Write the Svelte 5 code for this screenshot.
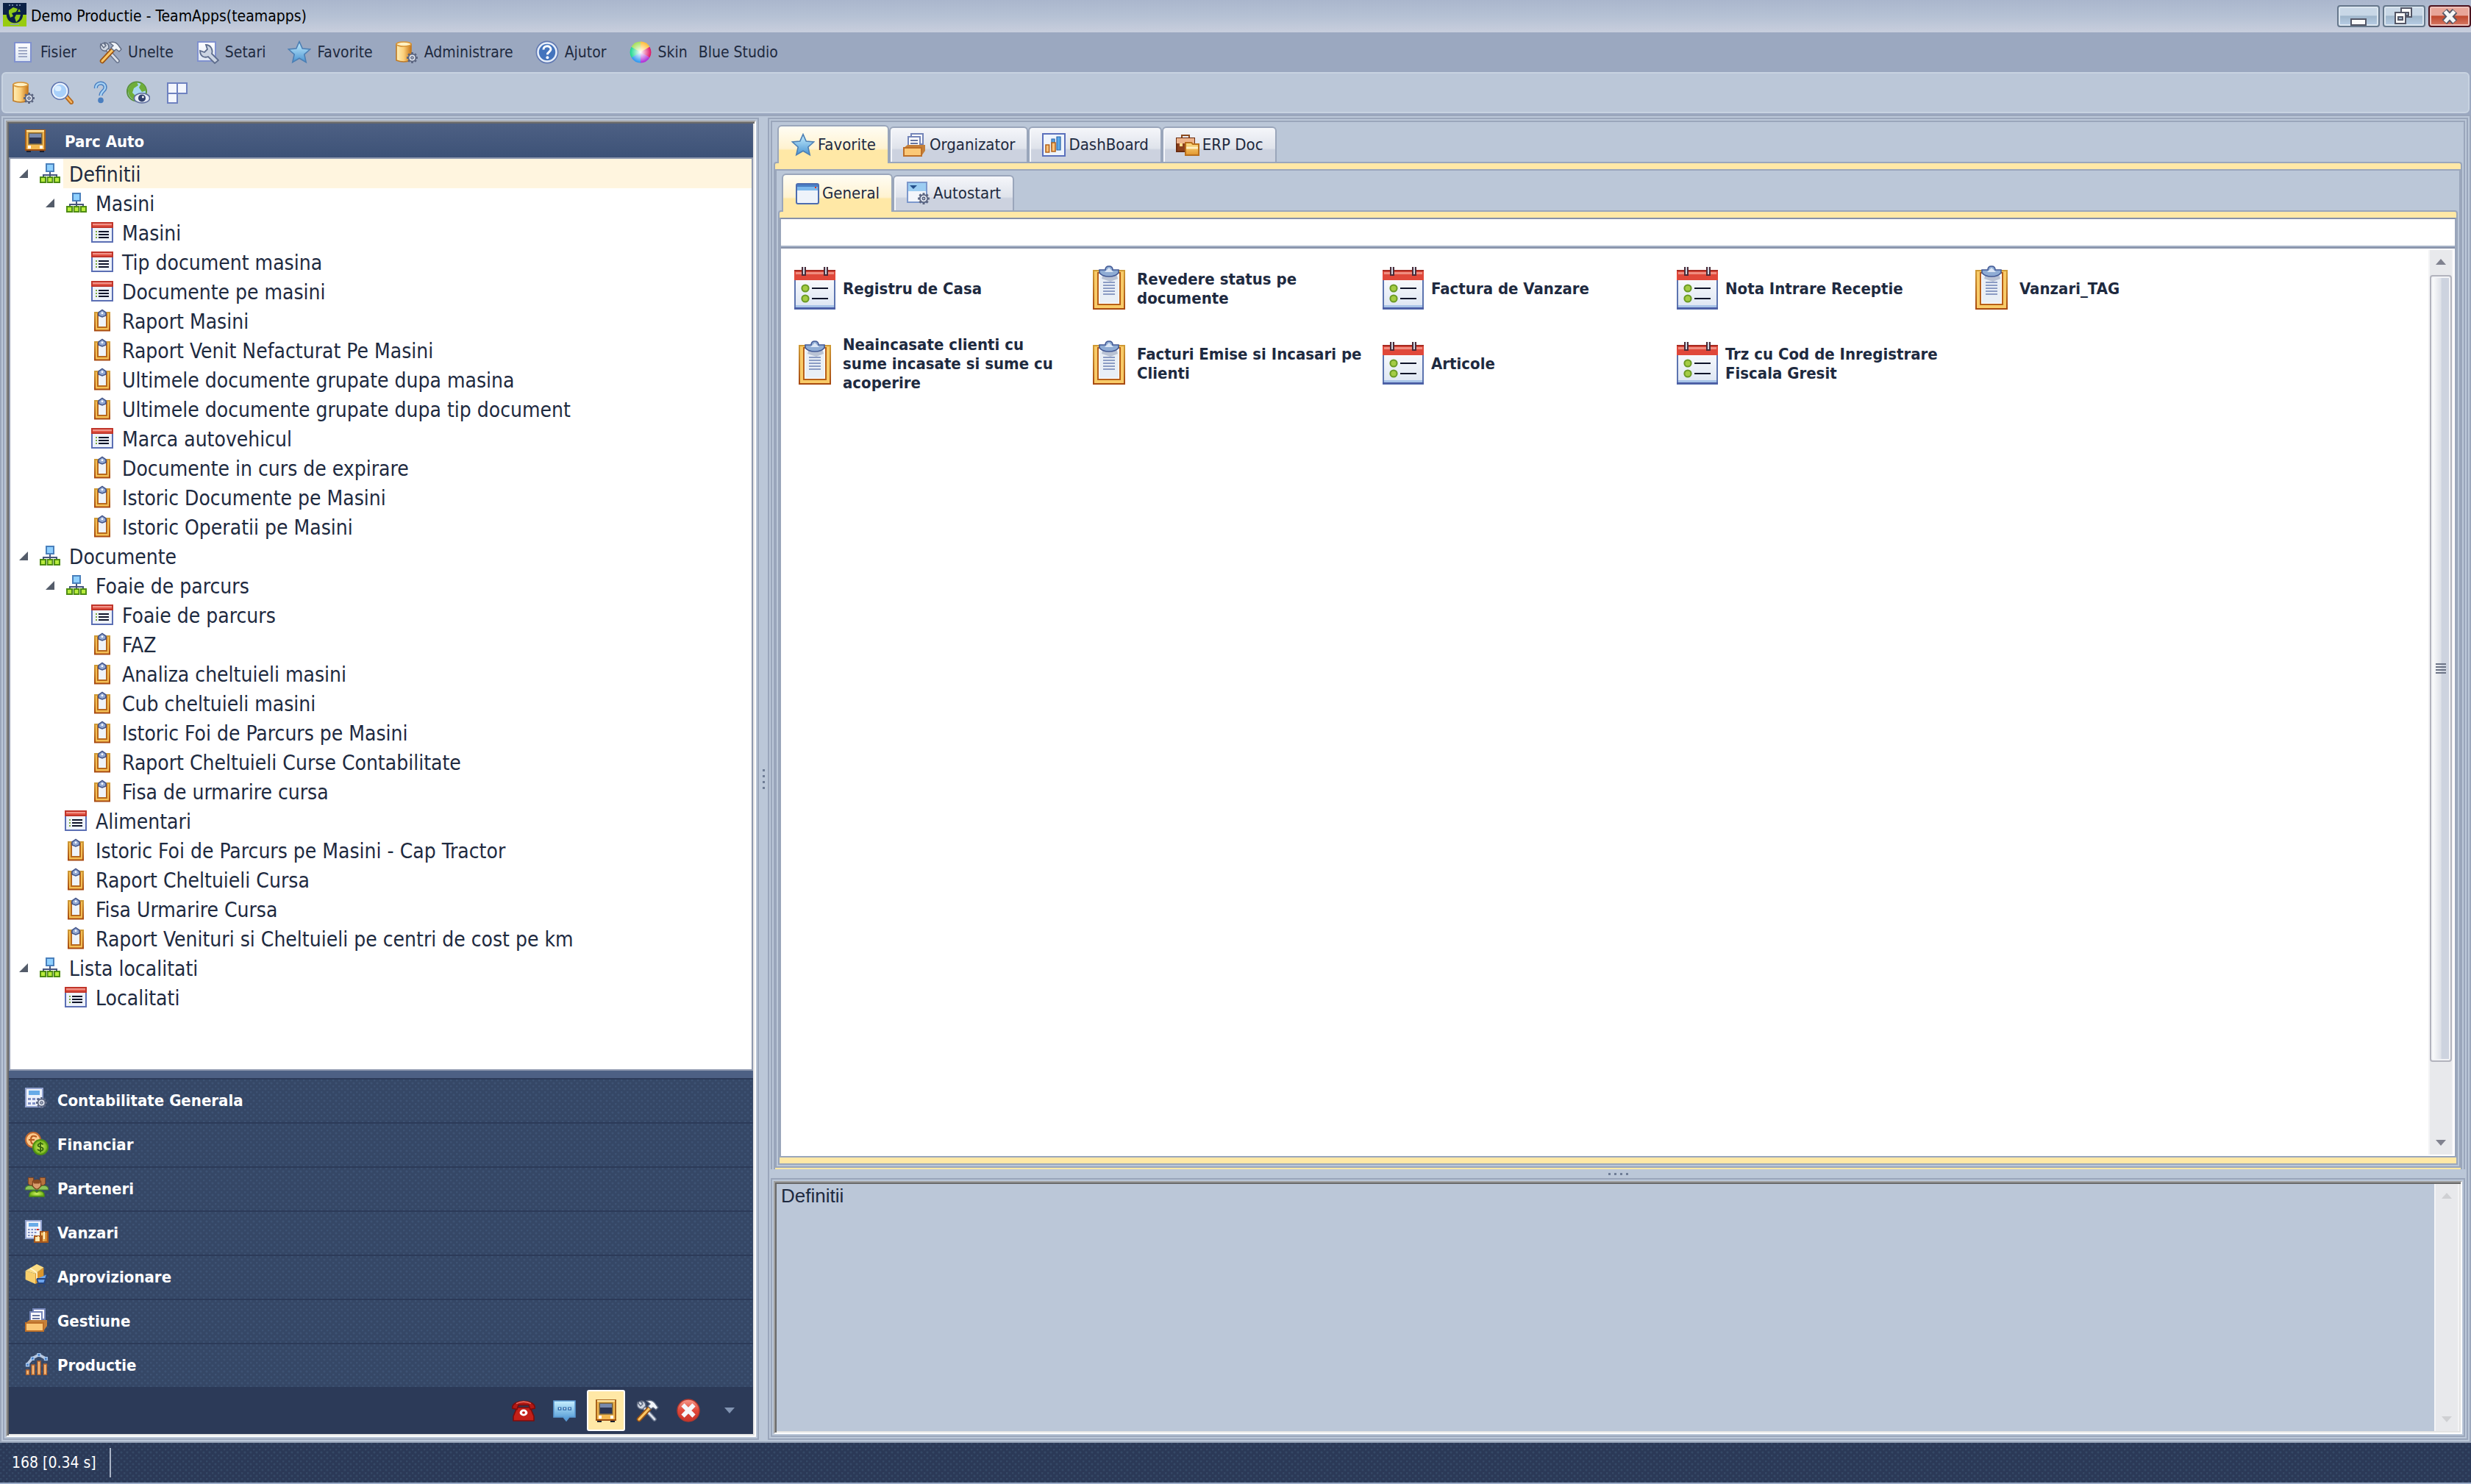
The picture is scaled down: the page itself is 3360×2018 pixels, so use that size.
<script>
	const menu = [
		{ name: 'Fisier', icon: 'page' },
		{ name: 'Unelte', icon: 'tools' },
		{ name: 'Setari', icon: 'settings' },
		{ name: 'Favorite', icon: 'star' },
		{ name: 'Administrare', icon: 'dbgear' },
		{ name: 'Ajutor', icon: 'help' },
		{ name: 'Skin', icon: 'wheel' }
	];

	const toolbar = [
		{ name: 'Baza de date', icon: 'dbgear' },
		{ name: 'Cautare', icon: 'search' },
		{ name: 'Ajutor', icon: 'question' },
		{ name: 'Web', icon: 'globe' },
		{ name: 'Ferestre', icon: 'layout' }
	];

	const tree = [
		{ name: 'Definitii', level: 0, icon: 'nodes' },
		{ name: 'Masini', level: 1, icon: 'nodes' },
		{ name: 'Masini', level: 2, icon: 'list' },
		{ name: 'Tip document masina', level: 2, icon: 'list' },
		{ name: 'Documente pe masini', level: 2, icon: 'list' },
		{ name: 'Raport Masini', level: 2, icon: 'clip' },
		{ name: 'Raport Venit Nefacturat Pe Masini', level: 2, icon: 'clip' },
		{ name: 'Ultimele documente grupate dupa masina', level: 2, icon: 'clip' },
		{ name: 'Ultimele documente grupate dupa tip document', level: 2, icon: 'clip' },
		{ name: 'Marca autovehicul', level: 2, icon: 'list' },
		{ name: 'Documente in curs de expirare', level: 2, icon: 'clip' },
		{ name: 'Istoric Documente pe Masini', level: 2, icon: 'clip' },
		{ name: 'Istoric Operatii pe Masini', level: 2, icon: 'clip' },
		{ name: 'Documente', level: 0, icon: 'nodes' },
		{ name: 'Foaie de parcurs', level: 1, icon: 'nodes' },
		{ name: 'Foaie de parcurs', level: 2, icon: 'list' },
		{ name: 'FAZ', level: 2, icon: 'clip' },
		{ name: 'Analiza cheltuieli masini', level: 2, icon: 'clip' },
		{ name: 'Cub cheltuieli masini', level: 2, icon: 'clip' },
		{ name: 'Istoric Foi de Parcurs pe Masini', level: 2, icon: 'clip' },
		{ name: 'Raport Cheltuieli Curse Contabilitate', level: 2, icon: 'clip' },
		{ name: 'Fisa de urmarire cursa', level: 2, icon: 'clip' },
		{ name: 'Alimentari', level: 1, icon: 'list' },
		{ name: 'Istoric Foi de Parcurs pe Masini - Cap Tractor', level: 1, icon: 'clip' },
		{ name: 'Raport Cheltuieli Cursa', level: 1, icon: 'clip' },
		{ name: 'Fisa Urmarire Cursa', level: 1, icon: 'clip' },
		{ name: 'Raport Venituri si Cheltuieli pe centri de cost pe km', level: 1, icon: 'clip' },
		{ name: 'Lista localitati', level: 0, icon: 'nodes' },
		{ name: 'Localitati', level: 1, icon: 'list' }
	];

	const modules = [
		{ name: 'Contabilitate Generala', icon: 'calcgear' },
		{ name: 'Financiar', icon: 'coins' },
		{ name: 'Parteneri', icon: 'people' },
		{ name: 'Vanzari', icon: 'calcboxes' },
		{ name: 'Aprovizionare', icon: 'box' },
		{ name: 'Gestiune', icon: 'drawer' },
		{ name: 'Productie', icon: 'bars' }
	];

	const small = [
		{ name: 'Telefon', icon: 'phone' },
		{ name: 'Mesaje', icon: 'chat' },
		{ name: 'Parc Auto', icon: 'bus' },
		{ name: 'Unelte', icon: 'tools' },
		{ name: 'Inchide', icon: 'cancel' }
	];

	const tabs = [
		{ name: 'Favorite', icon: 'star' },
		{ name: 'Organizator', icon: 'drawer' },
		{ name: 'DashBoard', icon: 'chart' },
		{ name: 'ERP Doc', icon: 'briefcase' }
	];

	const subtabs = [
		{ name: 'General', icon: 'window' },
		{ name: 'Autostart', icon: 'autostart' }
	];

	const favorites = [
		{ name: 'Registru de Casa', icon: 'biglist' },
		{ name: 'Revedere status pe documente', icon: 'bigclip' },
		{ name: 'Factura de Vanzare', icon: 'biglist' },
		{ name: 'Nota Intrare Receptie', icon: 'biglist' },
		{ name: 'Vanzari_TAG', icon: 'bigclip' },
		{ name: 'Neaincasate clienti cu sume incasate si sume cu acoperire', icon: 'bigclip' },
		{ name: 'Facturi Emise si Incasari pe Clienti', icon: 'bigclip' },
		{ name: 'Articole', icon: 'biglist' },
		{ name: 'Trz cu Cod de Inregistrare Fiscala Gresit', icon: 'biglist' }
	];

	let selected = $state(0);
	let module = $state('Parc Auto');
	let tab = $state('Favorite');
	let subtab = $state('General');
</script>

<svelte:head>
	<title>Demo Productie - TeamApps(teamapps)</title>
</svelte:head>

{#snippet icon(name)}
	<svg class="icon" viewBox="0 0 16 16" aria-hidden="true"><use href="#{name}" /></svg>
{/snippet}

{#snippet arrow(dir)}
	<svg class="arrow" viewBox="0 0 14 8" aria-hidden="true">
		<path d={dir === 'up' ? 'M7 0 14 8H0z' : 'M0 0h14L7 8z'} fill="currentColor" />
	</svg>
{/snippet}

<svg class="defs" width="0" height="0" aria-hidden="true">
	<defs>
		<linearGradient id="gold" x1="0" x2="1"><stop offset="0" stop-color="#fff0b8" /><stop offset=".5" stop-color="#fbcf7a" /><stop offset="1" stop-color="#c87618" /></linearGradient>
		<linearGradient id="goldv" x2="0" y2="1"><stop offset="0" stop-color="#fde08a" /><stop offset="1" stop-color="#e2952c" /></linearGradient>
		<linearGradient id="sky" x2="0" y2="1"><stop offset="0" stop-color="#c8f0ff" /><stop offset="1" stop-color="#4a94d2" /></linearGradient>
		<linearGradient id="sheet" x2="0" y2="1"><stop offset="0" stop-color="#ffffff" /><stop offset="1" stop-color="#dce5f2" /></linearGradient>
		<linearGradient id="red" x2="0" y2="1"><stop offset="0" stop-color="#f59a8c" /><stop offset=".5" stop-color="#e0483a" /><stop offset="1" stop-color="#c8342a" /></linearGradient>
		<linearGradient id="clipedge" x2="0" y2="1"><stop offset="0" stop-color="#cf9a35" /><stop offset="1" stop-color="#a84a10" /></linearGradient>
		<radialGradient id="lime"><stop offset="0" stop-color="#d8f468" /><stop offset="1" stop-color="#6cae14" /></radialGradient>
		<radialGradient id="white"><stop offset="0" stop-color="#fff" /><stop offset="1" stop-color="#fff" stop-opacity="0" /></radialGradient>
	</defs>

	<symbol id="gear" viewBox="0 0 16 16">
		<path d="M8 1v14M1 8h14M3 3l10 10M13 3L3 13" stroke="#5b6580" stroke-width="2.6" />
		<circle cx="8" cy="8" r="4.6" fill="#e4e9f2" stroke="#5b6580" stroke-width="1.6" />
		<circle cx="8" cy="8" r="1.7" fill="#aab4c8" stroke="#4a5470" />
	</symbol>
	<symbol id="logo" viewBox="0 0 16 16">
		<path d="M0 0h16v8H0z" fill="#0b2147" />
		<path d="M0 8h16v8H0z" fill="#98cc10" />
		<circle cx="8" cy="8" r="5.6" fill="#0b2147" />
		<path d="M4 5l3-2 3 1-1 2-3 1 1 2-2 1-1-3zM9 8l3 0-1 3-2 2-1-3zM11 4l1 2-2 0z" fill="#90c918" />
		<path d="M4 1.5h1m1 0h1m2 0h1m1 0h1M5 14.5h6" stroke="#8aa0c0" stroke-width=".7" />
	</symbol>
	<symbol id="page" viewBox="0 0 16 16">
		<path d="M2.500 1.500h11v13h-11z" fill="url(#sheet)" stroke="#8091cf" />
		<path d="M5 5h6M5 7h6M5 9h6M5 11h6" stroke="#8591b5" stroke-width=".8" />
	</symbol>
	<symbol id="tools" viewBox="0 0 16 16">
		<path d="M3 3l10 11" stroke="#65718a" stroke-width="2.8" stroke-linecap="round" />
		<path d="M3 3l10 11" stroke="#dbe1ea" stroke-width="1.4" stroke-linecap="round" />
		<path d="M1.500 2.500c-1 3 1 5 3.500 4.500l2-2c0-2-1-3.500-3-3.500l1 2-1.500 1.500z" fill="#d0d7e2" stroke="#606b82" stroke-width=".7" />
		<path d="M10 6l-7.500 8" stroke="#9c5312" stroke-width="3.200" stroke-linecap="round" />
		<path d="M10 6l-7.500 8" stroke="#fac766" stroke-width="1.600" stroke-linecap="round" />
		<path d="M7.500 1.500c3-1 5 0 6.500 2.500l1.500 2-1.500 1.500-2-1.500-1.500 1-2-2 1.500-1.500z" fill="#f2f5f9" stroke="#606b82" stroke-width=".7" />
	</symbol>
	<symbol id="settings" viewBox="0 0 16 16">
		<path d="M1.500 1h12v13h-12z" fill="url(#sheet)" stroke="#8091cf" />
		<path d="M7 3l1 3-2 2-3-1c0 4 3 5 5.500 4l4.500 4.500 2.500-2L11 9c1-3-1-6-4-6z" fill="#cbd4e2" stroke="#5d6c8c" stroke-width=".9" />
	</symbol>
	<symbol id="star" viewBox="0 0 16 16">
		<path d="M8 .8l2.100 4.700 5.200.5-3.900 3.500 1.200 5.300L8 12.100l-4.600 2.700 1.200-5.300L.7 6l5.200-.5z" fill="url(#sky)" stroke="#4c7fb4" stroke-width=".8" />
	</symbol>
	<symbol id="dbgear" viewBox="0 0 16 16">
		<path d="M1 2.500v11q5 2 10 0v-11z" fill="url(#gold)" stroke="#c07a24" stroke-width=".8" />
		<ellipse cx="6" cy="2.500" rx="5" ry="1.500" fill="#fff1c4" stroke="#d79538" stroke-width=".8" />
		<use href="#gear" x="7.500" y="7.500" width="8.500" height="8.500" />
	</symbol>
	<symbol id="help" viewBox="0 0 16 16">
		<circle cx="8" cy="8" r="7.300" fill="#e8effa" stroke="#6179b2" stroke-width=".8" />
		<circle cx="8" cy="8" r="5.600" fill="#4474bd" />
		<path d="M5.500 6.200c0-3 5-3 5-.2 0 1.800-2.300 1.700-2.300 3.600" fill="none" stroke="#fff" stroke-width="1.500" />
		<circle cx="8.200" cy="11.600" r="1" fill="#fff" />
	</symbol>
	<symbol id="wheel" viewBox="0 0 16 16">
		<path d="M8 8V.8A7.200 7.200 0 0 1 14.200 4.400z" fill="#ffc040" />
		<path d="M8 8l6.200-3.600a7.200 7.200 0 0 1 0 7.200z" fill="#e01868" />
		<path d="M8 8l6.200 3.600A7.200 7.200 0 0 1 8 15.200z" fill="#b030d8" />
		<path d="M8 8v7.200a7.200 7.200 0 0 1-6.200-3.600z" fill="#3098f0" />
		<path d="M8 8l-6.200 3.600a7.200 7.200 0 0 1 0-7.200z" fill="#20d890" />
		<path d="M8 8L1.800 4.400A7.200 7.200 0 0 1 8 .8z" fill="#a8e060" />
		<circle cx="8" cy="8" r="7" fill="url(#white)" />
	</symbol>
	<symbol id="search" viewBox="0 0 16 16">
		<path d="M11 10.500l3.500 4" stroke="#b56a20" stroke-width="3" stroke-linecap="round" />
		<path d="M11.500 11l3 3.500" stroke="#f5b562" stroke-width="1.300" stroke-linecap="round" />
		<circle cx="6.800" cy="6.800" r="5.700" fill="#a9d0fa" stroke="#5d74b0" />
		<circle cx="6.800" cy="6.800" r="4.900" fill="none" stroke="#eef4fc" />
		<ellipse cx="5.500" cy="5.200" rx="2.200" ry="1.800" fill="#dcefff" />
	</symbol>
	<symbol id="question" viewBox="0 0 16 16">
		<path d="M5.200 5c-.3-4.500 6.800-4.500 6.300-.3C11.300 7 8.500 7 8.500 10" fill="none" stroke="#4a7fc0" stroke-width="2.600" />
		<path d="M5.200 5c-.3-4.500 6.800-4.500 6.300-.3C11.300 7 8.500 7 8.500 10" fill="none" stroke="#a8d4f5" stroke-width="1.200" />
		<circle cx="8.500" cy="13.200" r="1.900" fill="#4a7fc0" />
	</symbol>
	<symbol id="globe" viewBox="0 0 16 16">
		<circle cx="7" cy="7.200" r="6.500" fill="#a9d8f2" stroke="#59923c" />
		<path d="M1 6c1-3 3-5 6-5l1 2-3 2-1 3 2 2-1 3c-3-2-4-4-4-7zM10 1.500c2 1 3 3 3.500 5l-3 1-2-3z" fill="#6fae3a" />
		<ellipse cx="10.500" cy="11.700" rx="5.300" ry="3.300" fill="#e6ebf6" stroke="#5f6f9e" stroke-width=".8" />
		<circle cx="10.500" cy="11.700" r="2.500" fill="#33426e" />
		<circle cx="11.200" cy="11" r=".7" fill="#fff" />
	</symbol>
	<symbol id="layout" viewBox="0 0 16 16">
		<path d="M2 1.500h6.500v7H2zM8.500 1.500H15v7H8.500zM2 8.500h6.500v6.500H2z" fill="#f3f6fd" stroke="#6f82c0" />
	</symbol>

	<symbol id="nodes" viewBox="0 0 16 16">
		<path d="M8 6v4M3.500 10.500V9h9v1.500" fill="none" stroke="#46557c" />
		<path d="M5.500 1.500h5v5h-5z" fill="#8fd0ff" stroke="#4a80bc" />
		<path d="M1.500 10.500h3.500V14H1.500zM6.300 10.500h3.400V14H6.300zM11 10.500h3.500V14H11z" fill="#b8ec3c" stroke="#4e8c14" />
	</symbol>
	<symbol id="list" viewBox="0 0 16 16">
		<path d="M.5 1.500h14v13H.5z" fill="#eef2fa" stroke="#5b6fb4" />
		<path d="M.5 1.500h14v3H.5z" fill="#e25445" stroke="#c0352a" />
		<path d="M1 2h13v1H1z" fill="#f1958a" />
		<path d="M5 7.500h7M5 9.500h7M5 11.500h7" stroke="#10152a" />
		<path d="M3 7.500h1M3 9.500h1M3 11.500h1" stroke="#7ba83c" />
	</symbol>
	<symbol id="clip" viewBox="0 0 16 16">
		<path d="M2.500 2.500h10v12.200h-10z" fill="#f4bf55" stroke="url(#clipedge)" />
		<path d="M4.500 3.500h6v9h-6z" fill="#eff3f9" stroke="#b8691c" />
		<path d="M5 2.500l2.500-1.800L10 2.500v2L7.500 5.500 5 4.500z" fill="#94aad4" stroke="#44568a" stroke-width=".8" />
		<circle cx="7.500" cy="2.900" r=".7" fill="#fff" />
	</symbol>

	<symbol id="biglist" viewBox="0 0 32 32">
		<path d="M2.500 4.500h27v26h-27z" fill="url(#sheet)" stroke="#5c74b0" />
		<path d="M2 4h28v7H2z" fill="#e0483a" />
		<path d="M2 4h28v1H2z" fill="#a82c22" />
		<path d="M3 5.500h26v1.500H3z" fill="#ef8d80" />
		<path d="M3 28h26v1.500H3z" fill="#a8c4e8" />
		<path d="M2 30h28" stroke="#4a5ca4" />
		<path d="M8.500 2v6M23.500 2v6" stroke="#4c2c38" stroke-width="3" />
		<path d="M8.500 2v5M23.500 2v5" stroke="#d0d8e4" />
		<circle cx="9.500" cy="16.500" r="2.300" fill="#a4cc44" stroke="#6a9a24" />
		<circle cx="9.500" cy="23.500" r="2.300" fill="#a4cc44" stroke="#6a9a24" />
		<path d="M14 16.500h11M14 23.500h11" stroke="#10152a" />
	</symbol>
	<symbol id="bigclip" viewBox="0 0 32 32">
		<path d="M5.500 4.500h21v26h-21z" fill="#f8cb68" stroke="url(#clipedge)" />
		<path d="M8.500 6h15v21.500h-15z" fill="#fff" stroke="#b85f18" />
		<path d="M9.500 8h13v18.500h-13z" fill="#e9eff6" />
		<path d="M12 12.500h8M12 14.500h8M12 16.500h8M12 18.500h8M12 20.500h8" stroke="#8b9cc4" />
		<path d="M12 7h9l1 3-5 2-6-2z" fill="#b9c2d4" />
		<path d="M9.500 4h4q0-2.500 2.500-2.500T18.500 4h4v2q-2 2.500-6.500 2.500T9.500 6z" fill="#8facd4" stroke="#435a96" stroke-width=".8" />
		<path d="M13 5.500l3-3 3 3z" fill="#dbe6f5" />
	</symbol>

	<symbol id="bus" viewBox="0 0 16 16">
		<path d="M2 14h3v2H2zM11 14h3v2h-3z" fill="#1c2030" />
		<path d="M1.500 1h13v13.500h-13z" fill="#f3b850" stroke="#a8641c" />
		<path d="M2 1h12v1H2z" fill="#ffe8a8" />
		<path d="M3.500 3h9v7.500h-9z" fill="#2c3654" stroke="#8a7240" stroke-width=".7" />
		<path d="M4 3.500h8V6H4z" fill="#7889ac" />
		<path d="M3 11.500h2v2H3zM11 11.500h2v2h-2z" fill="#fff" />
		<path d="M1 14.500h14" stroke="#9c4c10" />
	</symbol>
	<symbol id="calcgear" viewBox="0 0 16 16">
		<path d="M.5.500h11.500v12.500H.5z" fill="#eef2fb" stroke="#93a3d0" />
		<path d="M2.500 2h7.500v3H2.500z" fill="#68abe8" />
		<path d="M2 7h2v1.500H2zM5 7h2v1.500H5zM8 7h2v1.500H8zM2 10h2v1.500H2zM5 10h2v1.500H5z" fill="#8090c4" />
		<use href="#gear" x="7" y="6" width="8.500" height="8.500" />
	</symbol>
	<symbol id="coins" viewBox="0 0 16 16">
		<circle cx="5.500" cy="5.500" r="5" fill="#fbc98c" stroke="#c26a30" />
		<path d="M8 3.500q-4-2-4 2t4 2.500M2.500 5.500h4" fill="none" stroke="#b85a20" />
		<circle cx="10.500" cy="10.500" r="5" fill="url(#lime)" stroke="#4e9012" />
		<path d="M12.300 8.700c-1-1.200-3.600-.8-3.500.6.100 1.500 3.500.7 3.500 2.300 0 1.400-2.600 1.700-3.800.3M10.500 7v7" fill="none" stroke="#35640c" stroke-width=".9" />
	</symbol>
	<symbol id="people" viewBox="0 0 16 16">
		<path d="M0 9.500q0-3 4-3l4 2 4-2q4 0 4 3z" fill="#8cc45c" stroke="#4c8428" stroke-width=".6" />
		<path d="M2.200 1.200h3.600v4q-1.800 2.600-3.600 0zM10.200 1.200h3.600v4q-1.800 2.600-3.600 0z" fill="#b8733f" stroke="#7c4420" stroke-width=".5" />
		<path d="M5.200 3.600q2.800-1.800 5.600 0v3.200q-2.800 4.400-5.600 0z" fill="#d99c6c" stroke="#7c4420" stroke-width=".6" />
		<path d="M5.200 4q2.800-3 5.600 0l-1 1.200H6.200z" fill="#8a4a20" />
		<path d="M3 13q0-2.500 3.500-2.800l1.500 1 1.500-1Q13 10.500 13 13v1H3z" fill="url(#lime)" stroke="#4e9012" stroke-width=".7" />
	</symbol>
	<symbol id="calcboxes" viewBox="0 0 16 16">
		<path d="M.5.500h10.500v12H.5z" fill="#eef2fb" stroke="#93a3d0" />
		<path d="M2.500 2h6.500v2.500H2.500z" fill="#68abe8" />
		<path d="M2 6.500h8M2 8.500h6M2 10.500h5" stroke="#8090c4" stroke-dasharray="1.300 .9" />
		<path d="M8 6h1.300v1H8z" fill="#e02818" />
		<path d="M10.500 8h5v7h-5zM6.500 11h5v4h-5z" fill="url(#gold)" stroke="#a8581c" />
		<path d="M13 8v5M9 11v3" stroke="#fff0c4" />
	</symbol>
	<symbol id="box" viewBox="0 0 16 16">
		<path d="M.3 4.500L7 6.500v7L.3 10.500z" fill="#f8cf6c" />
		<path d="M7 6.500l5.700-4.200v8L7 13.500z" fill="#dc962c" />
		<path d="M.3 4.500L8 0l4.700 2.300L7 6.500z" fill="#fbdc84" />
		<path d="M3.500 2.800l3 2 1.500 1.200v5" fill="none" stroke="#fff3c8" stroke-width=".9" />
		<path d="M8 10h6l1-3M8 10l1 3h4l1-3" fill="#6ba4ee" stroke="#234480" stroke-width=".9" />
		<path d="M9 15h1M12.500 15h1" stroke="#234480" />
	</symbol>
	<symbol id="drawer" viewBox="0 0 16 16">
		<path d="M5.500.500h8v7h-8z" fill="#fff" stroke="#7384b8" />
		<path d="M3.500 2.500h8v7h-8z" fill="#fff" stroke="#7384b8" />
		<path d="M5 5h5M5 7h5" stroke="#66759f" />
		<path d="M.5 10l2.500-2h12v4l-2.500 3.500z" fill="#c4803a" />
		<path d="M.5 10h12v5.500H.5z" fill="#fbc877" stroke="#bd6f28" />
	</symbol>
	<symbol id="bars" viewBox="0 0 16 16">
		<path d="M.8 12h2v3.200h-2zM4.500 8.500h2v6.700h-2zM8.500 6h2v9.200h-2zM12.700 8h2v7.200h-2z" fill="#f6b978" stroke="#b0622c" stroke-width=".7" />
		<path d="M1.500 8.200L5 4l4.500-2.300 4.700 2.500" fill="none" stroke="#b9c7dc" stroke-width="1.800" />
		<path d="M.8 7.500h1.900v1.900H.8zM4.200 3.200h1.900v1.900H4.200zM8.500.8h1.900v1.900H8.500zM13.200 3.400h1.900v1.900h-1.900z" fill="#3f78c4" stroke="#a8c8ee" stroke-width=".7" />
	</symbol>
	<symbol id="phone" viewBox="0 0 16 16">
		<path d="M3.500 6h9l2.500 6v3H1v-3z" fill="#c42018" stroke="#7c0c0c" stroke-width=".8" />
		<path d="M.3 6.500C0 0 16 0 15.700 6.500l-3.200.8-1-3h-7l-1 3z" fill="#b41914" stroke="#7c0c0c" stroke-width=".8" />
		<path d="M3 3.300q5-2.500 10 0" fill="none" stroke="#ea6c60" stroke-width=".8" />
		<ellipse cx="8" cy="9.500" rx="2.700" ry="2.200" fill="#fff" />
		<ellipse cx="8" cy="9.500" rx="1" ry=".9" fill="#c42018" />
	</symbol>
	<symbol id="chat" viewBox="0 0 16 16">
		<path d="M.5 1.500h14.500v11h-4L9 15l-2-2.500H.5z" fill="url(#sky)" stroke="#5a9ad4" stroke-width=".8" />
		<path d="M3.300 6.800h2.400M6.700 6.800h2.400M10.100 6.800h2.400" stroke="#2c68a8" stroke-width="2.200" />
		<path d="M4 6.800h1M7.400 6.800h1M10.800 6.800h1" stroke="#e8f6ff" />
	</symbol>
	<symbol id="cancel" viewBox="0 0 16 16">
		<circle cx="8" cy="8" r="7.500" fill="url(#red)" stroke="#b8382c" stroke-width=".7" />
		<path d="M5.300 5.300l5.400 5.400M10.700 5.300l-5.400 5.400" stroke="#f5f7fb" stroke-width="3" stroke-linecap="square" />
	</symbol>
	<symbol id="chart" viewBox="0 0 16 16">
		<path d="M.5.500h15v15H.5z" fill="#eef4fc" stroke="#5a70bc" />
		<path d="M6.500 4h2v6h-2zM10 2.500h2.500v9H10z" fill="#5aa8e8" stroke="#2c64a8" stroke-width=".6" />
		<path d="M2.500 8h2.300v5H2.500zM6.500 6.500h2.500v6H6.500z" fill="#fbc47c" stroke="#b4641c" stroke-width=".8" />
	</symbol>
	<symbol id="briefcase" viewBox="0 0 16 16">
		<path d="M4 4V1.500h5V4" fill="none" stroke="#8a4a20" />
		<path d="M.5 3.500h12v9H.5z" fill="#8c401c" stroke="#6a2c10" />
		<path d="M.5 3.500h12v3.500H.5z" fill="#eeb48c" />
		<path d="M2.500 7h2v2h-2z" fill="#ffdf90" />
		<path d="M6.500 8V6.500h4l1 1h4v7.500h-9z" fill="url(#goldv)" stroke="#b86e1c" />
		<path d="M7 10h8" stroke="#fff0c0" stroke-width="1.500" />
	</symbol>
	<symbol id="window" viewBox="0 0 16 16">
		<rect x=".5" y="1.500" width="15" height="13.500" rx="1" fill="#eef3fa" stroke="#4c6cb0" />
		<path d="M1 2h14v4H1z" fill="#7cb8ec" />
		<path d="M1 2h14v1.500H1z" fill="#4a80c4" />
		<path d="M13 3.500h1v1h-1z" fill="#e03020" />
	</symbol>
	<symbol id="autostart" viewBox="0 0 16 16">
		<path d="M.5.500h13v13.500H.5z" fill="#f3f6fb" stroke="#7c98cc" />
		<path d="M1 1h12v5.500H1z" fill="#9ccdf2" />
		<path d="M2 2.500h5L4.500 5z" fill="#24508c" />
		<use href="#gear" x="7" y="7" width="9" height="9" />
	</symbol>
</svg>

<div class="app">
	<header class="titlebar">
		{@render icon('logo')}
		<span class="title">Demo Productie - TeamApps(teamapps)</span>
		<div class="winbuttons">
			<button aria-label="Minimizare">
				<svg viewBox="0 0 27 13" aria-hidden="true"><path d="M8.500 8.500h10v4h-10z" fill="#fbfbfb" stroke="#535666" /></svg>
			</button>
			<button aria-label="Restaurare">
				<svg viewBox="0 0 27 13" aria-hidden="true">
					<path d="M11.500 1h7v6h-7z" fill="#fbfbfb" stroke="#535666" />
					<path d="M14.500 4h2v2h-2z" fill="#9fb6cc" stroke="#535666" />
					<path d="M7.500 4h7v7.500h-7z" fill="#fbfbfb" stroke="#535666" />
					<path d="M9.500 7h3v2h-3z" fill="#9fb6cc" stroke="#535666" />
				</svg>
			</button>
			<button class="close" aria-label="Inchidere">
				<svg viewBox="0 0 27 13" aria-hidden="true">
					<path d="M10 3l7 7.500M17 3l-7 7.500" stroke="#535666" stroke-width="4.500" />
					<path d="M10.300 3.300l6.400 6.900M16.700 3.300l-6.400 6.900" stroke="#f6f6f6" stroke-width="2.600" />
				</svg>
			</button>
		</div>
	</header>

	<nav class="menu">
		{#each menu as item}
			<button>{@render icon(item.icon)}{item.name}</button>
		{/each}
		<button class="skin">Blue Studio</button>
	</nav>

	<div class="toolbar">
		{#each toolbar as item}
			<button aria-label={item.name}>{@render icon(item.icon)}</button>
		{/each}
	</div>

	<main>
		<aside>
			<div class="sunken side">
				<h1>{@render icon('bus')}<span>{module}</span></h1>
				<ul class="tree">
					{#each tree as row, i}
						<li>
							<button class:selected={i === selected} style="padding-left: {row.level * 36}px" onclick={() => (selected = i)}>
								<svg class="twist" viewBox="0 0 6 6" aria-hidden="true">
									{#if row.icon === 'nodes'}<path d="M6 0v6H0z" fill="#545c6a" />{/if}
								</svg>
								{@render icon(row.icon)}
								<span>{row.name}</span>
							</button>
						</li>
					{/each}
				</ul>
				<div class="grip"></div>
				<nav class="modules">
					{#each modules as item}
						<button onclick={() => (module = item.name)}>{@render icon(item.icon)}<span>{item.name}</span></button>
					{/each}
				</nav>
				<div class="small">
					{#each small as item}
						<button class:on={item.name === 'Parc Auto'} aria-label={item.name} onclick={() => (module = item.name)}>
							{@render icon(item.icon)}
						</button>
					{/each}
					<button aria-label="Mai multe">{@render arrow('down')}</button>
				</div>
			</div>
		</aside>

		<div class="splitter"><i></i><i></i><i></i><i></i></div>

		<section class="right">
			<div class="upper">
				<div class="tabs">
					{#each tabs as t}
						<button class:active={t.name === tab} onclick={() => (tab = t.name)}>{@render icon(t.icon)}{t.name}</button>
					{/each}
				</div>
				<div class="page outer">
					<div class="inner">
						<div class="tabs">
							{#each subtabs as t}
								<button class:active={t.name === subtab} onclick={() => (subtab = t.name)}>{@render icon(t.icon)}{t.name}</button>
							{/each}
						</div>
						<div class="page">
							<div class="inner sheet">
								<div class="caption"></div>
								<div class="content">
									<div class="favorites">
										{#each favorites as item}
											<button>
												<svg class="big" viewBox="0 0 32 32" aria-hidden="true"><use href="#{item.icon}" /></svg>
												<span>{item.name}</span>
											</button>
										{/each}
									</div>
									<div class="scroll">
										{@render arrow('up')}
										<div class="track">
											<div class="thumb"><i></i><i></i><i></i><i></i></div>
										</div>
										{@render arrow('down')}
									</div>
								</div>
							</div>
						</div>
					</div>
				</div>
			</div>
			<div class="splitter flat"><i></i><i></i><i></i><i></i></div>
			<div class="lower">
				<div class="sunken">
					<textarea readonly aria-label="Descriere" value="Definitii"></textarea>
					<div class="scroll off">
						{@render arrow('up')}
						<div class="track"></div>
						{@render arrow('down')}
					</div>
				</div>
			</div>
		</section>
	</main>

	<footer><span>168 [0.34 s]</span></footer>
</div>

<style>
	:global(body) {
		margin: 0;
		background: #9ba8c0;
	}
	.app {
		--dark: #9aa6bb;
		--light: #bbc7d8;
		--yellow: #ffe8a6;
		height: 100vh;
		display: flex;
		flex-direction: column;
		font: 22px/26px "DejaVu Sans Condensed", "DejaVu Sans", Tahoma, sans-serif;
		color: #1e2a3f;
		overflow: hidden;
	}
	.app * { box-sizing: border-box; }
	.defs { position: absolute; }
	button {
		font: inherit;
		color: inherit;
		background: none;
		border: 0;
		padding: 0;
		display: flex;
		align-items: center;
		text-align: left;
	}
	.icon {
		width: 32px;
		height: 32px;
		flex: none;
	}

	/* title bar */
	.titlebar {
		flex: none;
		display: flex;
		align-items: center;
		height: 44px;
		padding-left: 4px;
		gap: 6px;
		background: linear-gradient(#aab6cd, #b5c1d4 50%, #c8cedd);
		color: #000;
		font-size: 21px;
	}
	.titlebar .icon { margin-bottom: 4px; }
	.title { flex: 1; }
	.winbuttons {
		display: flex;
		gap: 4px;
	}
	.winbuttons button {
		width: 58px;
		height: 30px;
		border: 2px solid #66788c;
		border-radius: 4px;
		box-shadow: inset 0 0 0 2px #dbe6f0;
		background: linear-gradient(#c8d7e6 45%, #9fb6cb 50%, #b9cee6);
	}
	.winbuttons .close {
		border-color: #4c1420;
		box-shadow: inset 0 0 0 2px #efc0b8;
		background: linear-gradient(#e8a598 45%, #bf472c 50%, #d67a66);
	}
	.winbuttons svg { width: 54px; height: 26px; }

	/* menu and toolbar */
	.menu {
		flex: none;
		display: flex;
		height: 54px;
		font-size: 21px;
	}
	.menu button {
		padding: 0 15px;
		gap: 8px;
	}
	.menu .skin { padding: 0; }
	.toolbar {
		flex: none;
		display: flex;
		gap: 20px;
		height: 56px;
		margin: 0 2px 2px;
		padding-left: 12px;
		border: 2px solid #c8d3e1;
		border-radius: 6px;
		background: var(--light);
	}

	/* main area */
	main {
		flex: 1;
		min-height: 0;
		display: flex;
		border: 2px solid var(--dark);
		padding: 2px;
		background: var(--light);
	}
	aside {
		flex: none;
		width: 1028px;
		display: flex;
		border: 2px solid var(--dark);
		padding: 2px;
	}
	.sunken {
		flex: 1;
		display: flex;
		border: 2px solid;
		border-color: #a0a0a0 #fff #fff #a0a0a0;
		padding: 2px;
		box-shadow: inset 2px 2px #696969, inset -2px -2px #e3e3e3;
	}
	.side { flex-direction: column; }
	h1 {
		flex: none;
		display: flex;
		align-items: center;
		gap: 24px;
		height: 48px;
		margin: 0;
		padding-left: 20px;
		border-bottom: 2px solid #8e98ae;
		background: linear-gradient(#4d6084, #3d5277);
		color: #fff;
		font-size: 22px;
	}
	h1 span,
	.modules span,
	.favorites span { padding-top: 3px; }
	.tree {
		flex: 1;
		margin: 0;
		padding: 0;
		list-style: none;
		border: solid #8e98ae;
		border-width: 0 2px 2px;
		background: #fff;
		font-size: 28px;
		line-height: 36px;
	}
	.tree button { width: 100%; }
	.twist {
		flex: none;
		width: 12px;
		height: 12px;
		margin: 0 14px 0 12px;
	}
	.tree span {
		flex: 1;
		margin-left: 2px;
		padding: 4px 0 0 8px;
		white-space: nowrap;
	}
	.tree .selected span { background: #fff5df; }
	.grip {
		flex: none;
		height: 10px;
		background: #4d6084;
	}
	.modules button {
		width: 100%;
		height: 60px;
		padding: 0 0 4px 22px;
		gap: 12px;
		border-top: 2px solid #2c3a58;
		background-color: #354766;
		background-image: radial-gradient(circle at 1px 1px, #3d5273 1px, transparent 2px), radial-gradient(circle at 5px 5px, #3d5273 1px, transparent 2px);
		background-size: 8px 8px;
		color: #fff;
		font-weight: bold;
	}
	.small {
		flex: none;
		display: flex;
		justify-content: flex-end;
		align-items: center;
		gap: 4px;
		height: 64px;
		padding-right: 6px;
		background: #2c3a58;
		color: #8294b2;
	}
	.small button {
		width: 52px;
		height: 56px;
		justify-content: center;
	}
	.small .on {
		border: 2px solid #fff;
		border-radius: 3px;
		background: var(--yellow);
	}
	.arrow {
		width: 14px;
		height: 8px;
		flex: none;
	}

	.splitter {
		flex: none;
		width: 12px;
		display: flex;
		flex-direction: column;
		align-items: center;
		justify-content: center;
		gap: 5px;
	}
	.splitter i {
		width: 3px;
		height: 3px;
		background: #6f7d96;
	}
	.splitter.flat {
		width: auto;
		height: 12px;
		flex-direction: row;
	}

	/* right side */
	.right {
		flex: 1;
		min-width: 0;
		display: flex;
		flex-direction: column;
		border: 2px solid var(--dark);
		padding: 2px;
	}
	.upper {
		flex: 1;
		min-height: 0;
		display: flex;
		flex-direction: column;
		border: 2px solid var(--dark);
		border-bottom: 0;
		padding: 0 2px;
	}
	.tabs {
		flex: none;
		display: flex;
		align-items: flex-end;
		height: 54px;
		padding-left: 5px;
	}
	.tabs button {
		height: 48px;
		padding: 0 16px 0 17px;
		gap: 4px;
		border: 2px solid var(--dark);
		border-bottom: 0;
		border-radius: 6px 6px 0 0;
		box-shadow: inset 2px 2px #f4f6fa;
		background: linear-gradient(#f5f6fa, #dfe3eb 60%, #ccd2df 65%);
	}
	.tabs .active {
		height: 52px;
		margin-bottom: -2px;
		z-index: 1;
		box-shadow: none;
		background: linear-gradient(#fffdf4, #fff2d0 60%, var(--yellow) 65%);
	}
	.page {
		flex: 1;
		min-height: 0;
		display: flex;
		border: 2px solid var(--dark);
		border-radius: 4px 4px 0 0;
		padding: 8px 0;
		background: var(--yellow);
	}
	.page.outer {
		border-bottom: 0;
		padding-bottom: 2px;
	}
	.inner {
		flex: 1;
		display: flex;
		flex-direction: column;
		border: 2px solid var(--dark);
		padding: 0 2px 2px;
		background: var(--light);
	}
	.sheet {
		padding: 0;
		border-top-color: #8691a8;
		background: #fff;
	}
	.caption {
		flex: none;
		height: 40px;
		border-bottom: 2px solid #8691a8;
		box-shadow: inset 0 -2px #a5b1c6;
	}
	.content {
		flex: 1;
		display: flex;
		padding: 2px 2px 2px 0;
	}
	.favorites {
		flex: 1;
		display: grid;
		grid-template-columns: repeat(auto-fill, 400px);
		grid-auto-rows: 102px;
		align-content: start;
		padding-left: 14px;
	}
	.favorites button {
		gap: 6px;
		padding-right: 20px;
		font-weight: bold;
	}
	.big {
		flex: none;
		width: 64px;
		height: 64px;
	}

	.scroll {
		flex: none;
		display: flex;
		flex-direction: column;
		align-items: center;
		width: 34px;
		padding: 12px 0;
		background: #e8e9ec;
		border: solid #f4f4f6;
		border-width: 0 2px;
		color: #80828f;
	}
	.track {
		flex: 1;
		align-self: stretch;
		padding: 14px 0 106px;
	}
	.thumb {
		height: 100%;
		display: flex;
		flex-direction: column;
		align-items: center;
		justify-content: center;
		gap: 2px;
		border: 2px solid #b2b3bd;
		border-radius: 4px;
		box-shadow: inset 0 0 0 2px #f2f3f6;
		background: linear-gradient(90deg, #fff, #dfe2e9 50%, #cdd3df 55%);
	}
	.thumb i {
		width: 14px;
		height: 2px;
		background: #6c7486;
	}
	.scroll.off { color: #cfd0d3; }

	.lower {
		flex: none;
		height: 352px;
		display: flex;
		border: 2px solid var(--dark);
		padding: 2px;
	}
	textarea {
		flex: 1;
		border: 0;
		outline: 0;
		resize: none;
		padding: 0 6px;
		background: none;
		font: 26px/32px "Liberation Sans", Arial, sans-serif;
		color: inherit;
	}

	footer {
		flex: none;
		display: flex;
		align-items: center;
		height: 56px;
		padding-left: 16px;
		border-bottom: 2px solid #9aabc7;
		background-color: #2b3957;
		background-image: radial-gradient(circle at 1px 1px, #354866 1px, transparent 2px), radial-gradient(circle at 5px 5px, #354866 1px, transparent 2px);
		background-size: 8px 8px;
		color: #fff;
		font-size: 21px;
	}
	footer span {
		padding-right: 18px;
		border-right: 2px solid #aab4c6;
		line-height: 40px;
	}
</style>
